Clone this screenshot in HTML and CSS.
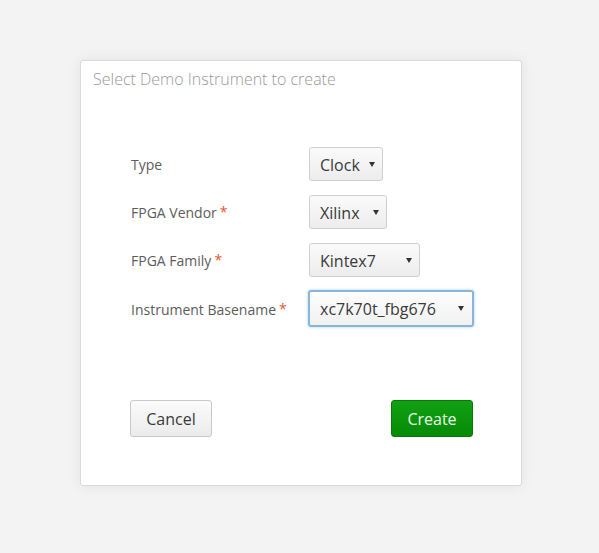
FILE: index.html
```html
<!DOCTYPE html>
<html>
<head>
<meta charset="utf-8">
<link rel="stylesheet" href="styles.css">
</head>
<body>
<div class="dialog">
  <div class="title">Select Demo Instrument to create</div>
  <div class="form">
    <div class="label">Type</div>
    <div class="select w-type"><span class="val">Clock</span><span class="arrow"></span></div>
    <div class="label">FPGA Vendor<span class="req">*</span></div>
    <div class="select w-vendor"><span class="val">Xilinx</span><span class="arrow"></span></div>
    <div class="label">FPGA Family<span class="req">*</span></div>
    <div class="select w-family"><span class="val">Kintex7</span><span class="arrow"></span></div>
    <div class="label">Instrument Basename<span class="req">*</span></div>
    <div class="select w-base focus"><span class="val">xc7k70t_fbg676</span><span class="arrow"></span></div>
  </div>
  <div class="footer">
    <button class="btn btn-cancel">Cancel</button>
    <button class="btn btn-create">Create</button>
  </div>
</div>
</body>
</html>
```
FILE: styles.css
```css
* { box-sizing: border-box; }
html, body { margin: 0; padding: 0; }
body {
  background: #f3f3f3;
  font-family: "Open Sans", "Noto Sans", sans-serif;
  width: 599px;
  height: 553px;
  overflow: hidden;
}
.dialog {
  width: 442px;
  height: 426px;
  margin: 60px 0 0 80px;
  background: #fff;
  border: 1px solid #dadada;
  border-radius: 3px;
  box-shadow: 0 0 14px rgba(0,0,0,0.07);
  display: flex;
  flex-direction: column;
}
.title {
  padding: 7px 12px 0 12px;
  font-size: 16px;
  font-weight: 300;
  line-height: 22px;
  color: #999;
}
.form {
  margin-top: 57px;
  padding-left: 49px;
  display: grid;
  grid-template-columns: 179px auto;
  row-gap: 14px;
  align-items: center;
}
.label {
  font-size: 14px;
  color: #5c5c5c;
  padding-left: 1px;
  padding-top: 1px;
}
.req {
  color: #e5562e;
  margin-left: 3px;
  font-size: 14px;
  position: relative;
  top: -1px;
}
.select {
  height: 34px;
  display: flex;
  align-items: center;
  padding: 0 7px 0 10px;
  border: 1px solid #cfcfcf;
  border-radius: 3px;
  background: linear-gradient(#fbfbfb, #ececec);
  font-size: 16px;
  color: #3a3a3a;
  justify-self: start;
}
.select .val { line-height: 32px; padding-top: 1px; }
.arrow {
  margin-left: auto;
  width: 0;
  height: 0;
  border-left: 3px solid transparent;
  border-right: 3px solid transparent;
  border-top: 5px solid #333;
}
.w-type { width: 74px; }
.w-vendor { width: 78px; }
.w-family { width: 111px; }
.w-base { width: 166px; margin-left: -1px; }
.select.focus {
  height: 37px;
  margin-top: -1px;
  border: 2px solid #86b7da;
  box-shadow: 0 0 3px rgba(100,160,210,0.55);
  background: linear-gradient(#fdfdfd, #f1f1f1);
  padding-right: 8px;
}
.footer {
  margin-top: 73px;
  padding: 0 48px 0 49px;
  display: flex;
  justify-content: space-between;
}
.btn {
  height: 37px;
  width: 82px;
  font-family: "Open Sans", "Noto Sans", sans-serif;
  font-size: 16px;
  border-radius: 3px;
  padding: 0;
  line-height: 34px;
}
.btn-cancel {
  background: linear-gradient(#fbfbfb, #ebebeb);
  border: 1px solid #c9c9c9;
  color: #3a3a3a;
}
.btn-create {
  background: linear-gradient(#12a012, #078a07);
  border: 1px solid #087808;
  color: #e6ffe6;
}
```
